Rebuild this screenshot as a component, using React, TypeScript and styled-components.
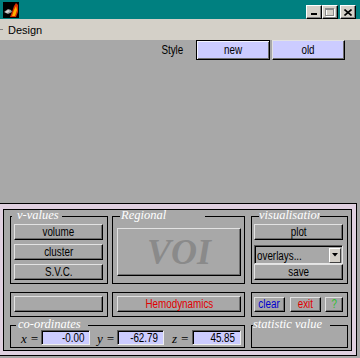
import React from 'react';
import styled, { createGlobalStyle } from 'styled-components';

const GRAY = '#a8a8a8';
const PINK = '#e0d0e0';
const LAV = '#ccccff';
const BEIGE = '#d4d0c8';

const Global = createGlobalStyle`
  html, body { margin: 0; padding: 0; background: ${GRAY}; }
  body { width: 360px; height: 358px; overflow: hidden; font-family: "Liberation Sans", Arial, sans-serif; }
  * { box-sizing: border-box; }
`;

const Window = styled.div`
  width: 360px;
  height: 358px;
  display: flex;
  flex-direction: column;
  overflow: hidden;
`;

const TitleBar = styled.div`
  height: 19px;
  flex: none;
  background: #008080;
  display: flex;
  align-items: flex-start;
  padding: 2px 4px 0 3px;
`;

const AppIcon = styled.svg`
  width: 16px;
  height: 16px;
  display: block;
`;

const TitleButtons = styled.div`
  margin-left: auto;
  margin-top: 3px;
  display: flex;
`;

const TitleBtn = styled.div<{ $gap?: number }>`
  width: 16px;
  height: 14px;
  margin-left: ${p => p.$gap ?? 0}px;
  background: ${BEIGE};
  border: 1px solid;
  border-color: #ffffff #000 #000 #ffffff;
  box-shadow: inset -1px -1px 0 #808080;
  display: flex;
  align-items: center;
  justify-content: center;
  svg { display: block; }
`;

const MenuBar = styled.div`
  height: 21px;
  flex: none;
  background: ${BEIGE};
  display: flex;
  align-items: center;
  font: 11px "Liberation Sans", Arial, sans-serif;
  color: #000;
`;

const MenuGrip = styled.span`
  width: 3px;
  height: 1px;
  background: #808080;
  margin-right: 5px;
`;

const MenuItem = styled.span`
  padding-top: 1px;
`;

const Figure = styled.div`
  flex: 1;
  background: ${GRAY};
  display: flex;
  flex-direction: column;
`;

const StyleRow = styled.div`
  height: 20px;
  flex: none;
  display: flex;
  justify-content: flex-end;
  padding-right: 15px;
  gap: 2px;
`;

const StyleLabel = styled.span`
  align-self: center;
  margin-right: 8px;
  font: 12px "Liberation Sans", Arial, sans-serif;
  color: #000;
`;

const Narrow = styled.span<{ $origin?: string }>`
  display: inline-block;
  white-space: nowrap;
  line-height: 1;
  transform: scaleX(0.82);
  transform-origin: ${p => p.$origin ?? 'center'};
`;

const Btn = styled.button<{ $w?: number; $h: number; $fg?: string; $bg?: string; $default?: boolean; $ml?: number }>`
  width: ${p => (p.$w ? `${p.$w}px` : '100%')};
  height: ${p => p.$h}px;
  flex: none;
  margin: 0 0 0 ${p => p.$ml ?? 0}px;
  padding: 0 0 1px 0;
  background: ${p => p.$bg ?? GRAY};
  color: ${p => p.$fg ?? '#000'};
  font: 12px "Liberation Sans", Arial, sans-serif;
  display: flex;
  align-items: center;
  justify-content: center;
  overflow: hidden;
  border: 1px solid;
  border-color: ${p => (p.$default ? '#000' : '#e2e2e2 #000 #000 #e2e2e2')};
  box-shadow: ${p =>
    p.$default ? 'inset 1px 1px 0 #f4f4ff, inset -1px -1px 0 #6e6e6e' : 'inset -1px -1px 0 #6e6e6e'};
`;

const BigBtn = styled(Btn)`
  font: italic bold 36px "Liberation Serif", "Times New Roman", serif;
  color: #8a8a8a;
  padding: 0;
`;

const Panel = styled.div`
  margin-top: 143px;
  width: 357px;
  height: 153px;
  flex: none;
  background: ${PINK};
  border: 1px solid #000;
  border-left: none;
  padding: 5px 4px 4px 3px;
`;

const Inner = styled.div`
  height: 100%;
  background: ${GRAY};
  border: 1px solid #000;
  padding: 6px 3px 2px 6px;
  display: grid;
  grid-template-columns: 98px 4px 133px 6px 97px;
  grid-template-rows: 68px 25px 23px;
  row-gap: 8px;
  grid-template-areas:
    "vv . rg . vs"
    "bl . hm . bt"
    "co co co . st";
`;

const Group = styled.div<{ $area: string; $pad?: string; $row?: boolean; $gap?: number }>`
  grid-area: ${p => p.$area};
  position: relative;
  border: 1px solid #000;
  padding: ${p => p.$pad ?? '0'};
  display: flex;
  flex-direction: ${p => (p.$row ? 'row' : 'column')};
  align-items: flex-start;
  gap: ${p => p.$gap ?? 0}px;
`;

const Legend = styled.span<{ $x: number; $w: number; $indent?: number }>`
  position: absolute;
  z-index: 1;
  top: -6px;
  left: ${p => p.$x}px;
  width: ${p => p.$w}px;
  height: 8px;
  padding-left: ${p => p.$indent ?? 0}px;
  background: ${GRAY};
  color: #ffffff;
  font: italic 12.5px "Liberation Serif", "Times New Roman", serif;
  line-height: 8px;
  white-space: nowrap;
  clip-path: inset(-8px 0 -8px 0);
`;

const Popup = styled.div`
  width: 89px;
  height: 19px;
  margin-top: 5px;
  flex: none;
  background: ${GRAY};
  border: 1px solid;
  border-color: #5a5a5a #e6e6e6 #e6e6e6 #5a5a5a;
  box-shadow: inset 1px 1px 0 #000;
  display: flex;
  align-items: center;
  padding: 1px 1px 0 2px;
  font: 12px "Liberation Sans", Arial, sans-serif;
  color: #000;
`;

const PopupText = styled.span`
  flex: 1;
  padding-top: 1px;
`;

const ArrowBox = styled.div`
  width: 12px;
  height: 15px;
  background: ${BEIGE};
  border: 1px solid;
  border-color: #ffffff #404040 #404040 #ffffff;
  display: flex;
  align-items: center;
  justify-content: center;
  svg { display: block; }
`;

const CoordLabel = styled.span`
  width: 20px;
  flex: none;
  align-self: center;
  font: italic 13px "Liberation Serif", "Times New Roman", serif;
  color: #000;
  white-space: nowrap;
  padding-top: 1px;
`;

const Field = styled.div<{ $w: number; $mr?: number }>`
  width: ${p => p.$w}px;
  height: 15px;
  flex: none;
  margin-right: ${p => p.$mr ?? 0}px;
  background: ${LAV};
  border: 1px solid;
  border-color: #5a5a5a #eeeeee #eeeeee #5a5a5a;
  box-shadow: inset 1px 1px 0 #000;
  display: flex;
  align-items: center;
  justify-content: flex-end;
  padding: 1px 5px 0 0;
  font: 12px "Liberation Sans", Arial, sans-serif;
  color: #000;
`;

const MatlabIcon = () => (
  <AppIcon viewBox="0 0 16 16">
    <rect width="16" height="16" fill="#000" />
    <path d="M1 10 L5 7 L8 8 L9 10 L5 12 Z" fill="#9a9a9a" />
    <path d="M2 10 L5 8 L7 9 L4 11 Z" fill="#d8d8d8" />
    <path d="M7 15 L9 10 L11 4 L13 1 L15 3 L15 10 L13 15 Z" fill="#d83000" />
    <path d="M9 14 L11 8 L13 4 L14 8 L12 14 Z" fill="#ffb000" />
  </AppIcon>
);

const L = ({ children, origin }: { children: React.ReactNode; origin?: string }) => (
  <Narrow $origin={origin}>{children}</Narrow>
);

export default function App() {
  return (
    <>
      <Global />
      <Window>
        <TitleBar>
          <MatlabIcon />
          <TitleButtons>
            <TitleBtn>
              <svg width="8" height="8" viewBox="0 0 8 8">
                <rect x="1" y="5" width="6" height="2" fill="#000" />
              </svg>
            </TitleBtn>
            <TitleBtn>
              <svg width="10" height="9" viewBox="0 0 10 9">
                <rect x="1.5" y="1.5" width="8" height="7" fill="none" stroke="#ffffff" />
                <rect x="0.5" y="0.5" width="8" height="7" fill="none" stroke="#8a8a8a" />
                <rect x="0.5" y="0.5" width="8" height="1.5" fill="#8a8a8a" />
              </svg>
            </TitleBtn>
            <TitleBtn $gap={2}>
              <svg width="8" height="7" viewBox="0 0 8 7">
                <path d="M0.5 0.5 L7.5 6.5 M7.5 0.5 L0.5 6.5" stroke="#000" strokeWidth="1.6" />
              </svg>
            </TitleBtn>
          </TitleButtons>
        </TitleBar>
        <MenuBar>
          <MenuGrip />
          <MenuItem>Design</MenuItem>
        </MenuBar>
        <Figure>
          <StyleRow>
            <StyleLabel>
              <L>Style</L>
            </StyleLabel>
            <Btn $w={74} $h={20} $bg={LAV} $default>
              <L>new</L>
            </Btn>
            <Btn $w={73} $h={20} $bg={LAV}>
              <L>old</L>
            </Btn>
          </StyleRow>
          <Panel>
            <Inner>
              <Group $area="vv" $pad="7px 4px 0 3px" $gap={4}>
                <Legend $x={1} $w={50} $indent={5}>v-values</Legend>
                <Btn $h={16}><L>volume</L></Btn>
                <Btn $h={16}><L>cluster</L></Btn>
                <Btn $h={16}><L>S.V.C.</L></Btn>
              </Group>
              <Group $area="rg" $pad="11px 0 0 4px">
                <Legend $x={7} $w={85} $indent={1}>Regional</Legend>
                <BigBtn $w={124} $h={48}>VOI</BigBtn>
              </Group>
              <Group $area="vs" $pad="7px 4px 0 2px">
                <Legend $x={7} $w={61}>visualisation</Legend>
                <Btn $h={16}><L>plot</L></Btn>
                <Popup>
                  <PopupText><L origin="left">overlays...</L></PopupText>
                  <ArrowBox>
                    <svg width="6" height="4" viewBox="0 0 6 4">
                      <path d="M0 0 H6 L3 3.5 Z" fill="#000" />
                    </svg>
                  </ArrowBox>
                </Popup>
                <Btn $h={16}><L>save</L></Btn>
              </Group>
              <Group $area="bl" $pad="3px 4px 0 3px">
                <Btn $h={16} />
              </Group>
              <Group $area="hm" $pad="3px 0 0 4px">
                <Btn $w={124} $h={16} $fg="#e00000"><L>Hemodynamics</L></Btn>
              </Group>
              <Group $area="bt" $pad="4px 0 0 2px" $row>
                <Btn $w={31} $h={15} $fg="#0000d0"><L>clear</L></Btn>
                <Btn $w={31} $h={15} $fg="#e00000" $ml={5}><L>exit</L></Btn>
                <Btn $w={18} $h={15} $fg="#30c030" $ml={4}><L>?</L></Btn>
              </Group>
              <Group $area="co" $pad="4px 0 0 10px" $row>
                <Legend $x={5} $w={72} $indent={2}>co-ordinates</Legend>
                <CoordLabel>x =</CoordLabel>
                <Field $w={49} $mr={7}><L origin="right">-0.00</L></Field>
                <CoordLabel>y =</CoordLabel>
                <Field $w={47} $mr={8}><L origin="right">-62.79</L></Field>
                <CoordLabel>z =</CoordLabel>
                <Field $w={49}><L origin="right">45.85</L></Field>
              </Group>
              <Group $area="st">
                <Legend $x={1} $w={77}>statistic value</Legend>
              </Group>
            </Inner>
          </Panel>
        </Figure>
      </Window>
    </>
  );
}
